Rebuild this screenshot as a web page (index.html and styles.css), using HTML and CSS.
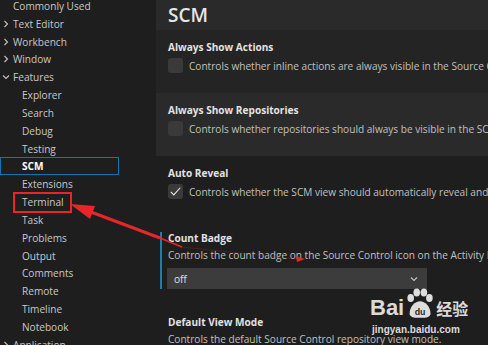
FILE: index.html
```html
<!DOCTYPE html>
<html lang="en">
<head>
  <meta charset="UTF-8">
  <title>Settings - SCM</title>
  <link rel="stylesheet" href="styles.css">
</head>
<body>

  <div class="window">
    <div class="sidebar">
      <ul class="tree">
        <li class="node child-0">Commonly Used</li>
        <li class="node"><svg class="chev" viewBox="0 0 8 8"><path d="M2.5 1l3 3-3 3"/></svg>Text Editor</li>
        <li class="node"><svg class="chev" viewBox="0 0 8 8"><path d="M2.5 1l3 3-3 3"/></svg>Workbench</li>
        <li class="node"><svg class="chev" viewBox="0 0 8 8"><path d="M2.5 1l3 3-3 3"/></svg>Window</li>
        <li class="node"><svg class="chev" viewBox="0 0 8 8"><path d="M1 2.5l3 3 3-3"/></svg>Features</li>
        <li class="node child">Explorer</li>
        <li class="node child">Search</li>
        <li class="node child">Debug</li>
        <li class="node child">Testing</li>
        <li class="node child selected">SCM</li>
        <li class="node child">Extensions</li>
        <li class="node child"><span class="marked">Terminal</span></li>
        <li class="node child">Task</li>
        <li class="node child">Problems</li>
        <li class="node child">Output</li>
        <li class="node child">Comments</li>
        <li class="node child">Remote</li>
        <li class="node child">Timeline</li>
        <li class="node child">Notebook</li>
        <li class="node"><svg class="chev" viewBox="0 0 8 8"><path d="M2.5 1l3 3-3 3"/></svg>Application</li>
      </ul>
    </div>

    <div class="main">
      <div class="section-title">SCM</div>

      <div class="setting shade-1">
        <div class="setting-body">
          <div class="setting-label">Always Show Actions</div>
          <div class="check-row">
            <span class="checkbox"></span>
            <span class="setting-desc">Controls whether inline actions are always visible in the Source Control view.</span>
          </div>
        </div>
      </div>

      <div class="setting shade-2">
        <div class="setting-body">
          <div class="setting-label">Always Show Repositories</div>
          <div class="check-row">
            <span class="checkbox"></span>
            <span class="setting-desc">Controls whether repositories should always be visible in the SCM view.</span>
          </div>
        </div>
      </div>

      <div class="setting">
        <div class="setting-body">
          <div class="setting-label">Auto Reveal</div>
          <div class="check-row">
            <span class="checkbox">
              <svg viewBox="0 0 16 16"><path d="M3 8.5l3.2 3.2L13 4"/></svg>
            </span>
            <span class="setting-desc">Controls whether the SCM view should automatically reveal and select files when opening them.</span>
          </div>
        </div>
      </div>

      <div class="setting badge-setting">
        <div class="setting-body focused">
          <div class="setting-label">Count Badge</div>
          <div class="setting-desc block">Controls the count badge on the Source Control icon on the Activity Bar.</div>
          <div class="dropdown">
            <span>off</span>
            <svg class="drop-chev" viewBox="0 0 10 10"><path d="M2 3.5l3 3 3-3"/></svg>
          </div>
        </div>
      </div>

      <div class="setting view-setting">
        <div class="setting-body">
          <div class="setting-label">Default View Mode</div>
          <div class="setting-desc block">Controls the default Source Control repository view mode.</div>
        </div>
      </div>
    </div>

    <svg class="annotation" viewBox="0 0 488 345">
      <line x1="160" y1="238" x2="91" y2="212" stroke="#e8262a" stroke-width="3"/>
      <polygon points="70,204 95,206 90,219" fill="#e8262a"/>
      <line x1="160" y1="238" x2="182" y2="247" stroke="#e8262a" stroke-width="1.5"/>
      <line x1="182" y1="247" x2="296" y2="259" stroke="#e8262a" stroke-width="0.6" opacity="0.4"/>
      <polygon points="296,256 305,259 297,262" fill="#e8262a"/>
    </svg>

    <div class="watermark">
      <div class="wm-top">
        <span class="wm-bai">Bai</span>
        <svg class="wm-paw" viewBox="0 0 30 30">
          <ellipse cx="7" cy="10" rx="3" ry="3.6"/>
          <ellipse cx="12.5" cy="5" rx="3" ry="3.6"/>
          <ellipse cx="19" cy="5" rx="3" ry="3.6"/>
          <ellipse cx="24" cy="10" rx="3" ry="3.6"/>
          <path d="M6 24c0-6 5-11 9.5-11S25 18 25 24c0 3-3 4-9.5 4S6 27 6 24z"/>
          <text x="15.5" y="25" class="wm-du">du</text>
        </svg>
        <span class="wm-jy">经验</span>
      </div>
      <div class="wm-url">jingyan.baidu.com</div>
    </div>
  </div>

</body>
</html>
```

FILE: styles.css
```css
* {
  box-sizing: border-box;
  margin: 0;
  padding: 0;
}

body {
  font-family: 'Open Sans', 'Noto Sans', sans-serif;
  background-color: #1e1e1e;
  color: #cccccc;
  font-size: 10.1px;
  overflow: hidden;
}

.window {
  position: relative;
  display: flex;
  width: 488px;
  height: 345px;
  overflow: hidden;
}

/* left table of contents */
.sidebar {
  width: 156px;
  flex-shrink: 0;
  background-color: #1e1e1e;
}

.tree {
  list-style: none;
  width: 119px;
  margin-top: -3px;
}

.node {
  display: flex;
  align-items: center;
  height: 17.83px;
  padding-left: 2px;
  color: #c8c8c8;
  white-space: nowrap;
}

.node.child-0 {
  padding-left: 13px;
}

.node.child {
  padding-left: 22px;
}

.chev {
  width: 8px;
  height: 8px;
  margin-right: 3px;
  fill: none;
  stroke: #c5c5c5;
  stroke-width: 1.1;
}

.node.selected {
  border: 1px solid #0f74b8;
  padding-left: 21px;
  font-weight: bold;
  color: #ffffff;
}

.marked {
  border: 2px solid #e8262a;
  margin-left: -9px;
  padding: 0 6px 0 7px;
  line-height: 17px;
}

/* settings editor */
.main {
  flex: 1;
  background-color: #1e1e1e;
}

.section-title {
  height: 30px;
  line-height: 30px;
  padding-left: 12px;
  background-color: #2a2a2a;
  color: #e7e7e7;
  font-size: 19px;
  font-weight: 600;
}

.setting {
  height: 63px;
  padding: 10px 0 0 12px;
  white-space: nowrap;
}

.shade-1 {
  background-color: #242424;
}

.shade-2 {
  background-color: #2a2a2a;
}

.setting-body {
  border-left: 2px solid transparent;
  margin-left: -8px;
  padding-left: 6px;
}

.setting-body.focused {
  border-left-color: #1a7fb0;
}

.setting-label {
  line-height: 14px;
  font-weight: 700;
  color: #e2e2e2;
}

.check-row {
  display: flex;
  align-items: center;
  gap: 6px;
  margin-top: 4px;
}

.checkbox {
  width: 15px;
  height: 15px;
  flex-shrink: 0;
  border-radius: 3px;
  background-color: #3a3a3a;
}

.checkbox svg {
  display: block;
  width: 15px;
  height: 15px;
  fill: none;
  stroke: #e8e8e8;
  stroke-width: 1.2;
}

.setting-desc {
  color: #c0c0c0;
  line-height: 14px;
}

.setting-desc.block {
  display: block;
  margin-top: 4px;
}

.badge-setting {
  height: 70px;
  padding-top: 13px;
}

.badge-setting .setting-label {
  line-height: 12px;
}

.dropdown {
  display: flex;
  align-items: center;
  justify-content: space-between;
  width: 260px;
  height: 21px;
  margin: 6px 0 0 -1px;
  padding: 0 8px 0 7px;
  background-color: #3c3c3c;
  color: #e0e0e0;
}

.drop-chev {
  width: 10px;
  height: 10px;
  fill: none;
  stroke: #c5c5c5;
  stroke-width: 1.1;
}

.view-setting {
  height: auto;
  padding-top: 26px;
}

.view-setting .setting-desc.block {
  margin-top: 3px;
}

/* red hand-drawn annotation and watermark over the picture */
.annotation {
  position: absolute;
  left: 0;
  top: 0;
  width: 488px;
  height: 345px;
  pointer-events: none;
}

.watermark {
  position: absolute;
  left: 370px;
  top: 286px;
  color: rgba(255, 255, 255, 0.85);
  pointer-events: none;
}

.wm-top {
  display: flex;
  align-items: flex-end;
  height: 34px;
}

.wm-bai {
  font-family: 'Liberation Sans', sans-serif;
  font-weight: bold;
  font-size: 22px;
  line-height: 24px;
}

.wm-paw {
  width: 33px;
  height: 33px;
  margin-left: -1px;
  fill: rgba(255, 255, 255, 0.85);
}

.wm-du {
  font-family: 'Liberation Sans', sans-serif;
  font-size: 8px;
  font-weight: bold;
  fill: #2a2a2a;
  text-anchor: middle;
}

.wm-jy {
  font-family: 'Noto Sans CJK SC', sans-serif;
  font-size: 16px;
  line-height: 23px;
  font-weight: bold;
}

.wm-url {
  font-family: 'Liberation Sans', sans-serif;
  font-size: 10px;
  font-weight: bold;
  line-height: 12px;
  margin-top: 4px;
  margin-left: 2px;
}
```
